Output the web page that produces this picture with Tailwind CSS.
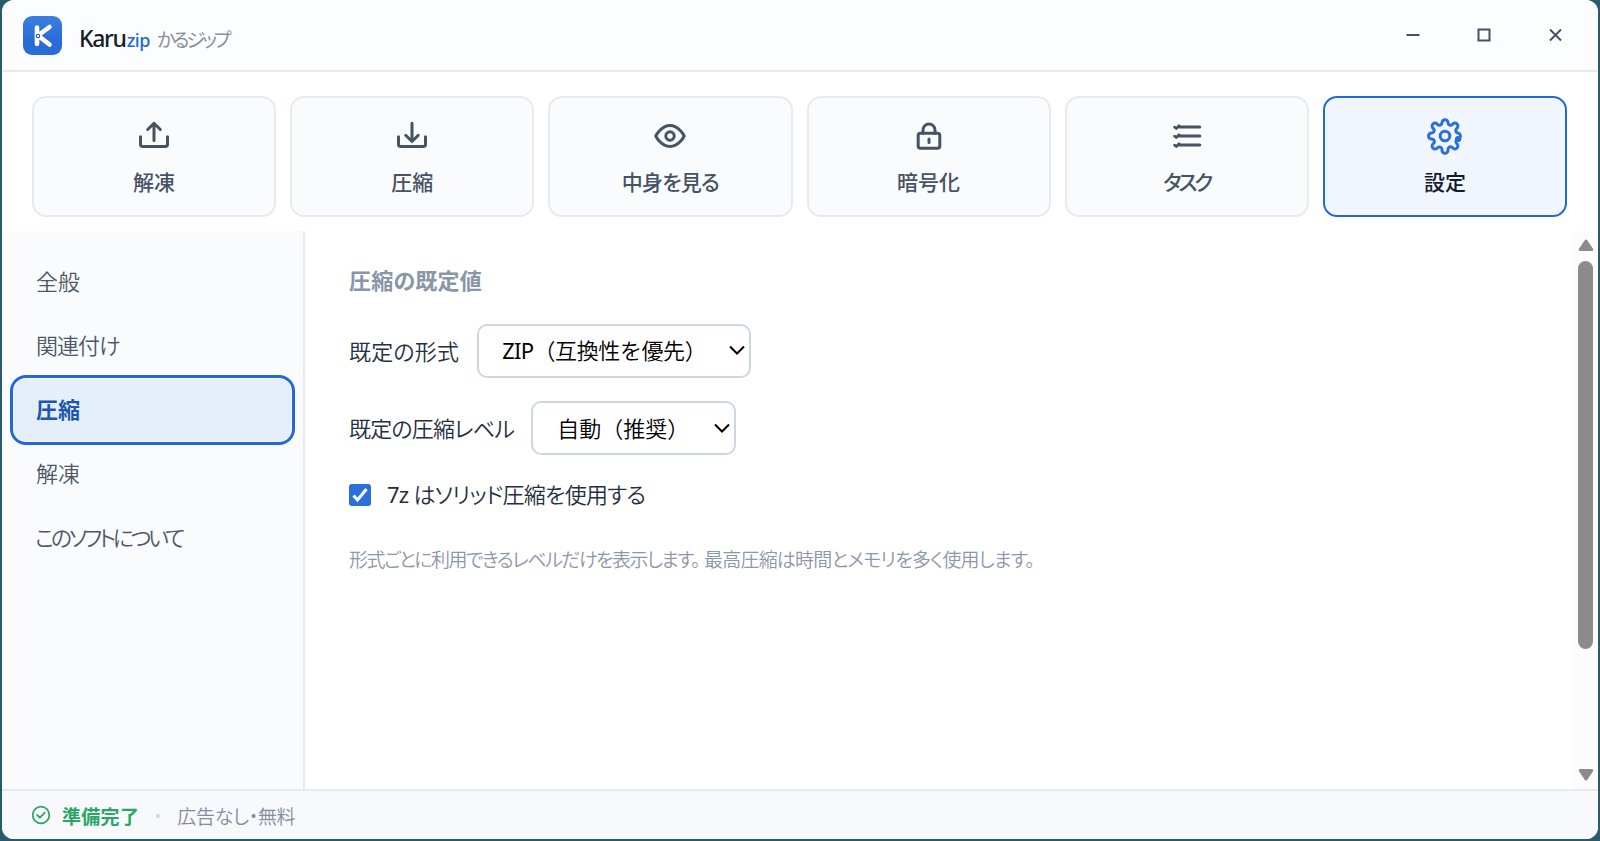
<!DOCTYPE html>
<html lang="ja">
<head>
    <meta charset="UTF-8">
    <meta name="viewport" content="width=device-width, initial-scale=1.0">
    <title>Karuzip かるジップ</title>
    <script src="https://cdn.jsdelivr.net/npm/@tailwindcss/browser@4"></script>
</head>
<body class="h-screen overflow-hidden bg-[#2b5b6b] pl-0.5 pr-0.5 pb-0.5 font-['Noto_Sans','Noto_Sans_CJK_JP',sans-serif] [font-feature-settings:'palt']">
    <div class="flex h-full flex-col overflow-hidden rounded-xl bg-white">

        <!-- Title bar -->
        <header class="flex h-[72px] shrink-0 items-center border-b-2 border-[#e6ebf1] bg-[#fcfdff] pl-[21px] pr-2">
            <svg class="size-[39px]" viewBox="0 0 39 39" fill="none">
                <defs>
                    <linearGradient id="logo" x1="0" y1="0" x2="0" y2="1">
                        <stop offset="0" stop-color="#3a80e0"/>
                        <stop offset=".6" stop-color="#296cd8"/>
                    </linearGradient>
                </defs>
                <rect width="39" height="39" rx="9" fill="url(#logo)"/>
                <path d="M14 11.500v16.500M26.500 11 15 19.500l11.500 9" stroke="#fff" stroke-width="4.600" stroke-linecap="round"/>
                <circle cx="15" cy="20" r="1.700" fill="#fff" stroke="#1d57b8" stroke-width="1.100"/>
            </svg>
            <h1 class="ml-[17px] flex items-baseline pt-1.5 whitespace-nowrap">
                <span class="text-[23px] font-medium tracking-[-1.3px] text-[#141c28]">Karu</span>
                <span class="ml-px text-[18px] font-medium tracking-[-0.4px] text-[#2168d8]">zip</span>
                <span class="ml-[7px] text-[19px] tracking-[-3px] text-[#87909d]">かるジップ</span>
            </h1>
            <div class="ml-auto flex text-[#465161]">
                <button class="flex h-10 w-[71px] items-center justify-center"><svg class="size-4" viewBox="0 0 16 16" stroke="currentColor" stroke-width="2"><path d="M1.500 8h13"/></svg></button>
                <button class="flex h-10 w-[71px] items-center justify-center"><svg class="size-4" viewBox="0 0 16 16" fill="none" stroke="currentColor" stroke-width="2"><path d="M2.500 2.500h11v11h-11z"/></svg></button>
                <button class="flex h-10 w-[71px] items-center justify-center"><svg class="size-4" viewBox="0 0 16 16" stroke="currentColor" stroke-width="2"><path d="m3 2.500 11 11m0-11-11 11"/></svg></button>
            </div>
        </header>

        <!-- Toolbar -->
        <nav class="grid h-[159px] shrink-0 grid-cols-6 gap-3.5 pt-6 pr-[31px] pb-3.5 pl-[30px] text-[21px] font-medium text-[#465364]">
            <button class="flex flex-col items-center rounded-[14px] border-2 border-[#e6ebf2] bg-[#fafbfd] pt-5">
                <svg class="size-9" viewBox="0 0 24 24" fill="none" stroke="currentColor" stroke-width="2" stroke-linecap="round" stroke-linejoin="round"><path d="M12 15V3.500M7.800 7.700 12 3.500l4.200 4.200M3 12.500v5a1.500 1.500 0 0 0 1.500 1.500h15a1.500 1.500 0 0 0 1.500-1.500v-5"/></svg>
                <span class="mt-3 leading-8">解凍</span>
            </button>
            <button class="flex flex-col items-center rounded-[14px] border-2 border-[#e6ebf2] bg-[#fafbfd] pt-5">
                <svg class="size-9" viewBox="0 0 24 24" fill="none" stroke="currentColor" stroke-width="2" stroke-linecap="round" stroke-linejoin="round"><path d="M12 3.500V15.500M7.800 11.500l4.200 4.200 4.200-4.200M3 12.500v5a1.500 1.500 0 0 0 1.500 1.500h15a1.500 1.500 0 0 0 1.500-1.500v-5"/></svg>
                <span class="mt-3 leading-8">圧縮</span>
            </button>
            <button class="flex flex-col items-center rounded-[14px] border-2 border-[#e6ebf2] bg-[#fafbfd] pt-5">
                <svg class="size-9" viewBox="0 0 24 24" fill="none" stroke="currentColor" stroke-width="2" stroke-linecap="round" stroke-linejoin="round"><path d="M2.500 12S6 5 12 5 21.500 12 21.500 12 18 19 12 19 2.500 12 2.500 12z"/><circle cx="12" cy="12" r="2.800"/></svg>
                <span class="mt-3 leading-8 tracking-[-0.8px]">中身を見る</span>
            </button>
            <button class="flex flex-col items-center rounded-[14px] border-2 border-[#e6ebf2] bg-[#fafbfd] pt-5">
                <svg class="size-9" viewBox="0 0 24 24" fill="none" stroke="currentColor" stroke-width="2" stroke-linecap="round" stroke-linejoin="round"><rect x="4.800" y="10.200" width="14.400" height="10" rx="1.500"/><path d="M8 10.200V8a4 4 0 0 1 8 0v2.200M12 14v2.400"/></svg>
                <span class="mt-3 leading-8">暗号化</span>
            </button>
            <button class="flex flex-col items-center rounded-[14px] border-2 border-[#e6ebf2] bg-[#fafbfd] pt-5">
                <svg class="size-9" viewBox="0 0 24 24" fill="none" stroke="currentColor" stroke-width="2" stroke-linecap="round" stroke-linejoin="round"><path d="M7 6h13.500M7 12h13.500M7 18h13.500"/><path stroke-width="1.800" d="m3.700 6.100 1.200.9 1.800-1.900M3.700 12.100l1.200.9 1.800-1.900M3.700 18.100l1.200.9 1.800-1.900"/></svg>
                <span class="mt-3 leading-8 tracking-[-3px]">タスク</span>
            </button>
            <button class="flex flex-col items-center rounded-[14px] border-2 border-[#2169da] bg-[#f1f6fe] pt-5">
                <svg class="size-9 overflow-visible text-[#2b70da]" viewBox="0 0 24 24" fill="none" stroke="currentColor" stroke-width="2" stroke-linecap="round" stroke-linejoin="round"><circle cx="12" cy="12" r="3.200"/><path d="M19.400 15a1.700 1.700 0 0 0 .3 1.900l.1.100a2 2 0 1 1-2.800 2.800l-.1-.1a1.700 1.700 0 0 0-2.900 1.200v.600a2 2 0 1 1-4 0V21a1.700 1.700 0 0 0-2.900-1.200l-.1.100a2 2 0 1 1-2.800-2.800l.1-.1A1.700 1.700 0 0 0 3.100 14H3a2 2 0 1 1 0-4h.100a1.700 1.700 0 0 0 1.200-2.900l-.1-.1A2 2 0 1 1 7 4.200l.1.100A1.700 1.700 0 0 0 10 3.100a2 2 0 1 1 4 0 1.700 1.700 0 0 0 2.900 1.200l.1-.1A2 2 0 1 1 19.800 7l-.1.100a1.700 1.700 0 0 0 .9 2.900 2 2 0 0 1 1.200 3.300l-1.500-.3a1 1 0 0 0 0 1.900h.3a1 1 0 0 0 1.100-1.600"/></svg>
                <span class="mt-3 leading-8 text-[#141c28]">設定</span>
            </button>
        </nav>

        <main class="flex min-h-0 flex-1">
            <!-- Settings sections -->
            <aside class="flex w-[303px] shrink-0 flex-col gap-0.5 border-r-2 border-[#e6ebf2] bg-[#fafbfd] px-3 pt-5 text-[22px] font-[350] text-[#4c586a]">
                <a class="flex h-[62px] items-center pb-px pl-[22px]">全般</a>
                <a class="flex h-[62px] items-center pb-px pl-[22px] tracking-[-1px]">関連付け</a>
                <a class="flex h-[62px] items-center rounded-xl bg-[#e5effc] pb-px pl-[22px] font-bold text-[#1d57b2] outline-3 outline-offset-1 outline-[#2169da]">圧縮</a>
                <a class="flex h-[62px] items-center pb-px pl-[22px]">解凍</a>
                <a class="flex h-[62px] items-center pb-px pl-[21px] tracking-[-3.2px]">このソフトについて</a>
            </aside>

            <section class="flex-1 pt-[33px] pl-11 text-[22px] font-[350] text-[#252f3f]">
                <h2 class="h-8 leading-8 font-bold tracking-[0.2px] text-[#8a95a7]">圧縮の既定値</h2>
                <div class="mt-7 flex items-center">
                    <label class="tracking-[0.2px]">既定の形式</label>
                    <div class="ml-[18px] flex h-[54px] w-[274px] items-center rounded-[10px] border-2 border-[#ccd6e4] bg-white pr-1 pb-0.5 pl-[23px] text-black">
                        <span class="tracking-[-0.4px] whitespace-nowrap [font-feature-settings:normal]"><span class="font-normal tracking-[-0.7px]">ZIP</span>（互換性を優先）</span>
                        <svg class="ml-auto size-4 shrink-0" viewBox="0 0 16 16" fill="none" stroke="currentColor" stroke-width="2"><path d="m1 4.500 7 7 7-7"/></svg>
                    </div>
                </div>
                <div class="mt-[23px] flex items-center">
                    <label class="pt-px tracking-[-0.8px]">既定の圧縮レベル</label>
                    <div class="ml-[17px] flex h-[54px] w-[205px] items-center rounded-[10px] border-2 border-[#ccd6e4] bg-white pr-1 pl-[24px] text-black">
                        <span class="whitespace-nowrap [font-feature-settings:normal]">自動（推奨）</span>
                        <svg class="ml-auto size-4 shrink-0" viewBox="0 0 16 16" fill="none" stroke="currentColor" stroke-width="2"><path d="m1 4.500 7 7 7-7"/></svg>
                    </div>
                </div>
                <label class="mt-6 flex h-8 items-center">
                    <svg class="size-[22px]" viewBox="0 0 22 22" fill="none"><rect width="22" height="22" rx="3" fill="#2a6fda"/><path d="m4.500 11.500 4 4.500 9-11" stroke="#fff" stroke-width="3"/></svg>
                    <span class="ml-4 pb-px tracking-[-0.75px]"><span class="font-normal">7z</span> はソリッド圧縮を使用する</span>
                </label>
                <p class="mt-[33px] text-[19px] leading-8 text-[#8c97a8]"><span class="mr-[5px] tracking-[-1.55px]">形式ごとに利用できるレベルだけを表示します。</span><span class="tracking-[-0.8px]">最高圧縮は時間とメモリを多く使用します。</span></p>
            </section>

            <!-- Scrollbar -->
            <div class="flex w-[25px] flex-col items-center bg-[#fcfcfc] pt-2 pb-2 text-[#8b8b8b]">
                <svg class="h-3 w-4" viewBox="0 0 16 12" fill="currentColor" stroke="currentColor" stroke-width="3" stroke-linejoin="round"><path d="m8 2 5.800 8.500h-11.600z"/></svg>
                <div class="mt-2.5 h-[388px] w-[15px] rounded-full bg-[#8b8b8b]"></div>
                <svg class="mt-auto h-3 w-4" viewBox="0 0 16 12" fill="currentColor" stroke="currentColor" stroke-width="3" stroke-linejoin="round"><path d="m8 10 5.800-8.500h-11.600z"/></svg>
            </div>
        </main>

        <!-- Status bar -->
        <footer class="flex h-[50px] shrink-0 items-center border-t-2 border-[#e6ebf1] bg-[#f8f9fd] pl-[29px] text-[19px]">
            <svg class="size-5 text-[#2aa764]" viewBox="0 0 20 20" fill="none" stroke="currentColor" stroke-width="1.800" stroke-linecap="round" stroke-linejoin="round"><circle cx="10" cy="10" r="8.300"/><path d="m6.200 10 2.700 2.700 4.800-5"/></svg>
            <span class="ml-[11px] pt-1 font-bold tracking-[0.3px] text-[#2aa764]">準備完了</span>
            <span class="mr-[17px] ml-[17px] mt-0.5 size-1 rounded-full bg-[#cfd6e0]"></span>
            <span class="pt-1 font-[350] tracking-[-0.3px] text-[#838d9c]">広告なし・無料</span>
        </footer>
    </div>
</body>
</html>
